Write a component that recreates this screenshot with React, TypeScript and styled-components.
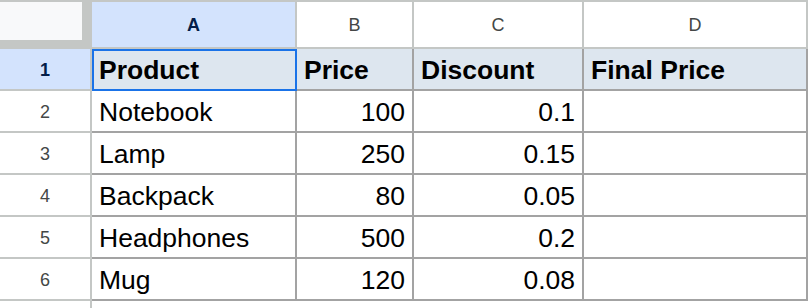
import React from 'react';
import styled, { createGlobalStyle } from 'styled-components';

const GlobalStyle = createGlobalStyle`
  body {
    margin: 0;
    background: #ffffff;
    font-family: 'Liberation Sans', Arial, sans-serif;
  }
`;

const Sheet = styled.div`
  display: grid;
  grid-template-columns: 92px 205px 117px 170px 224px;
  grid-template-rows: 49px repeat(6, 42px) 20px;
  width: 808px;
  height: 308px;
  overflow: hidden;
`;

const Corner = styled.div`
  background: #c4c7c5;
  padding-top: 2px;
  box-sizing: border-box;
`;

const CornerBox = styled.div`
  width: 82px;
  height: 38px;
  background: #f8f9fa;
`;

const ColHeader = styled.div<{ $selected?: boolean }>`
  box-sizing: border-box;
  border-top: 2px solid #c4c7c5;
  border-right: 2px solid #c4c7c5;
  border-bottom: 2px solid #c4c7c5;
  background: ${(p) => (p.$selected ? '#d3e3fd' : '#ffffff')};
  color: ${(p) => (p.$selected ? '#041e49' : '#444746')};
  font-weight: ${(p) => (p.$selected ? 700 : 400)};
  font-size: 18px;
  padding-top: 2px;
  display: flex;
  align-items: center;
  justify-content: center;
`;

const RowHeader = styled.div<{ $selected?: boolean }>`
  box-sizing: border-box;
  border-right: 2px solid #c4c7c5;
  border-bottom: 2px solid #c4c7c5;
  background: ${(p) => (p.$selected ? '#d3e3fd' : '#ffffff')};
  color: ${(p) => (p.$selected ? '#041e49' : '#444746')};
  font-weight: ${(p) => (p.$selected ? 700 : 400)};
  font-size: 18px;
  padding-top: 2px;
  display: flex;
  align-items: center;
  justify-content: center;
`;

const Cell = styled.div<{ $head?: boolean; $right?: boolean; $active?: boolean }>`
  box-sizing: border-box;
  border-right: 2px solid #a3a3a3;
  border-bottom: 2px solid #a3a3a3;
  background: ${(p) => (p.$head ? '#dde6ef' : '#ffffff')};
  color: #000000;
  font-size: 26.5px;
  font-weight: ${(p) => (p.$head ? 700 : 400)};
  padding: 2px 7px 0;
  display: flex;
  align-items: center;
  justify-content: ${(p) => (p.$right ? 'flex-end' : 'flex-start')};
  white-space: nowrap;
  outline: ${(p) => (p.$active ? '2px solid #1a73e8' : 'none')};
  outline-offset: -2px;
`;

const Blank = styled.div``;

const columns = ['A', 'B', 'C', 'D'];
const headings = ['Product', 'Price', 'Discount', 'Final Price'];

const rows = [
  { product: 'Notebook', price: '100', discount: '0.1' },
  { product: 'Lamp', price: '250', discount: '0.15' },
  { product: 'Backpack', price: '80', discount: '0.05' },
  { product: 'Headphones', price: '500', discount: '0.2' },
  { product: 'Mug', price: '120', discount: '0.08' },
];

const App: React.FC = () => {
  return (
    <>
      <GlobalStyle />
      <Sheet>
        <Corner>
          <CornerBox />
        </Corner>
        {columns.map((c) => (
          <ColHeader key={c} $selected={c === 'A'}>
            {c}
          </ColHeader>
        ))}

        <RowHeader $selected>1</RowHeader>
        {headings.map((h, i) => (
          <Cell key={h} $head $active={i === 0}>
            {h}
          </Cell>
        ))}

        {rows.map((r, i) => (
          <React.Fragment key={r.product}>
            <RowHeader>{i + 2}</RowHeader>
            <Cell>{r.product}</Cell>
            <Cell $right>{r.price}</Cell>
            <Cell $right>{r.discount}</Cell>
            <Cell />
          </React.Fragment>
        ))}

        <RowHeader />
        <Blank />
        <Blank />
        <Blank />
        <Blank />
      </Sheet>
    </>
  );
};

export default App;
